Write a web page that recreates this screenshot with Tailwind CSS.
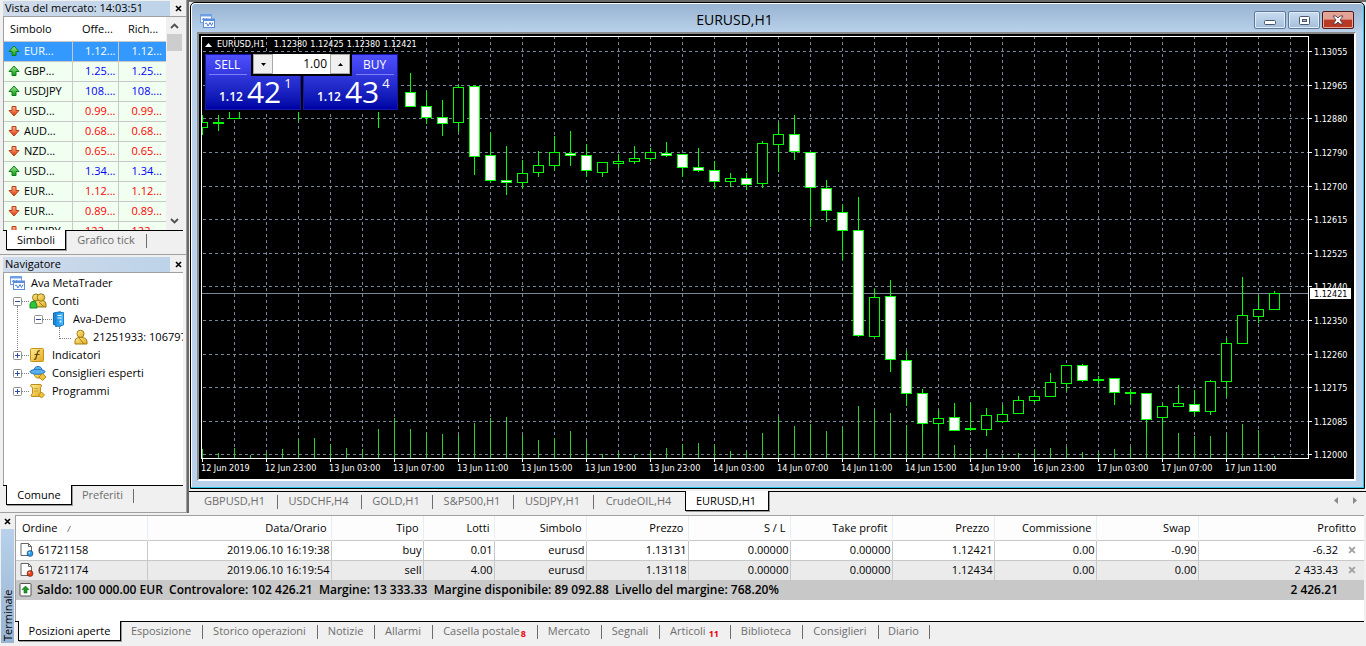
<!DOCTYPE html>
<html lang="it">
<head>
<meta charset="utf-8">
<title>Ava MetaTrader - EURUSD,H1</title>
<script src="https://cdn.jsdelivr.net/npm/@tailwindcss/browser@4"></script>
</head>
<body class="flex h-screen min-h-[560px] flex-col overflow-hidden bg-[#f0f0f0] font-['Open_Sans','Noto_Sans',sans-serif] text-[11px] leading-4 text-black">

<svg class="absolute size-0" aria-hidden="true">
  <defs>
    <linearGradient id="gUp" x1="0" y1="0" x2="0" y2="1"><stop offset="0" stop-color="#9bea8a"/><stop offset="1" stop-color="#129a1c"/></linearGradient>
    <linearGradient id="gDown" x1="0" y1="0" x2="0" y2="1"><stop offset="0" stop-color="#ffb08a"/><stop offset="1" stop-color="#dc3a0a"/></linearGradient>
    <linearGradient id="gGold" x1="0" y1="0" x2="1" y2="1"><stop offset="0" stop-color="#ffec94"/><stop offset="1" stop-color="#e0aa20"/></linearGradient>
    <linearGradient id="gBlue" x1="0" y1="0" x2="1" y2="0"><stop offset="0" stop-color="#1a8be0"/><stop offset="1" stop-color="#52c0fa"/></linearGradient>
  </defs>
  <symbol id="up" viewBox="0 0 12 12"><path d="M6 1 11 6.500H8V10.500H4V6.500H1Z" fill="url(#gUp)" stroke="#0a7d18" stroke-linejoin="round"/></symbol>
  <symbol id="down" viewBox="0 0 12 12"><path d="M6 11 1 5.500H4V1.500H8V5.500H11Z" fill="url(#gDown)" stroke="#b8401a" stroke-linejoin="round"/></symbol>
  <symbol id="charts" viewBox="0 0 16 16">
    <rect x="1.500" y="1.500" width="11" height="8" fill="#fff" stroke="#6d9fe6"/><path d="M1 2.500H13" stroke="#6d9fe6" stroke-width="2"/><path d="M3 7 4.500 5 6 8 8 5" fill="none" stroke="#5b93e0"/>
    <rect x="4.500" y="6" width="11" height="8.500" fill="#fff" stroke="#5b8ddc"/><path d="M4 7H16" stroke="#5b8ddc" stroke-width="2"/><path d="M6 10.500 7.500 10 9 13 11 9.500 12.500 12.500 14 9.500" fill="none" stroke="#4a80d8"/>
  </symbol>
  <symbol id="person" viewBox="0 0 14 16"><path d="M1 15V12Q1 9 4.500 8.500H8Q13 9 13 12.500V15Z" fill="url(#gGold)" stroke="#a87c10"/><circle cx="6.500" cy="4.800" r="3.600" fill="url(#gGold)" stroke="#a87c10"/><path d="M5 9 10 15" stroke="#a87c10"/></symbol>
  <symbol id="people" viewBox="0 0 18 16"><path d="M6 14V10Q6 7 9 7H13Q17 8 17 11V14Z" fill="url(#gGold)" stroke="#8d7a10"/><circle cx="7" cy="4.500" r="3.500" fill="url(#gGold)" stroke="#8d7a10"/><circle cx="12" cy="4.500" r="3.700" fill="url(#gGold)" stroke="#8d7a10"/><path d="M1 15V11Q2 8 5 8Q8 9 8 15Z" fill="#2fc43c" stroke="#128a20"/><path d="M10 9 15 14" stroke="#a87c10"/></symbol>
  <symbol id="server" viewBox="0 0 12 16"><path d="M1 2 8 .7V15.300L1 13.500Z" fill="#1f8de4" stroke="#0c67b4"/><path d="M3 1.500H11V14L5 15.500H3Z" fill="url(#gBlue)" stroke="#1c80cc"/><path d="M5 4.500H9M5 7H9" stroke="#e6f8ff"/><circle cx="8" cy="10.500" r="1" fill="#e6f8ff"/></symbol>
  <symbol id="func" viewBox="0 0 16 16"><rect x="1.500" y="1.500" width="13" height="13" rx="1" fill="url(#gGold)" stroke="#c69318"/><path d="M11 4Q9 3 8.300 6L7 11Q6.500 13 5 12M5.500 7.500H10.500" fill="none" stroke="#5e430a" stroke-width="1.200"/></symbol>
  <symbol id="expert" viewBox="0 0 18 16"><path d="M5 8Q9 10 13 8V11Q11 14 8 13Q5 12 5 8Z" fill="url(#gGold)" stroke="#c08c18"/><path d="M5 6Q5 1.500 9 1.500T13 6" fill="#63b8f4" stroke="#2574b4"/><ellipse cx="8.500" cy="6.800" rx="7.500" ry="2.500" fill="#58aeef" stroke="#2574b4"/><path d="M13.500 8.500 17 12 13.500 15.500 10 12Z" fill="#f1c33c" stroke="#b98914"/></symbol>
  <symbol id="script" viewBox="0 0 16 16"><path d="M2 1.500H12Q13.500 3 11.500 4.500V11H13V13.500H2.500Q1 12 3.500 10.500V4.500Q.5 3.500 2 1.500Z" fill="url(#gGold)" stroke="#bd8f1a"/><path d="M5.500 5.500H9.500M5.500 8H9.500" stroke="#a37812" stroke-dasharray="1 1"/><path d="M12.500 9 15.500 12 12.500 15 9.500 12Z" fill="#f1c33c" stroke="#b98914"/></symbol>
  <symbol id="plus" viewBox="0 0 9 9"><rect x=".5" y=".5" width="8" height="8" rx="1" fill="#fff" stroke="#8e8e8e"/><path d="M2 4.500H7M4.500 2V7" stroke="#2d4fa8"/></symbol>
  <symbol id="minus" viewBox="0 0 9 9"><rect x=".5" y=".5" width="8" height="8" rx="1" fill="#fff" stroke="#8e8e8e"/><path d="M2 4.500H7" stroke="#2d4fa8"/></symbol>
  <symbol id="x" viewBox="0 0 7 7"><path d="M1 1 6 6M6 1 1 6" stroke="currentColor" stroke-width="1.600"/></symbol>
  <symbol id="doc" viewBox="0 0 14 16"><path d="M1 1.500H8.500L11.500 4.500V13.500H1Z" fill="#fff" stroke="#666"/><path d="M8.500 1.500V4.500H11.500" fill="none" stroke="#666"/><circle cx="10" cy="11.500" r="3" fill="currentColor" stroke="#00000066"/><circle cx="9.300" cy="10.600" r=".9" fill="#ffffffaa"/></symbol>
  <symbol id="sum" viewBox="0 0 14 16"><rect x="1" y="1.500" width="11" height="12.500" rx="1" fill="#fff" stroke="#555"/><path d="M6.500 4 10 7.500H8V11H5V7.500H3Z" fill="#1f9a2a" stroke="#0a6d14" stroke-width=".6"/></symbol>
</svg>

<main class="flex min-h-0 flex-1">
  <!-- Left docked panels -->
  <aside class="flex w-[188px] shrink-0 flex-col border-r border-[#696969]">
    <section class="flex h-[255px] shrink-0 flex-col border-b border-r border-[#a0a0a0] pl-[3px] pt-px">
      <header class="flex h-[15px] shrink-0 items-center">
        <h2 class="h-full w-[167px] bg-gradient-to-r from-[#cfdbea] to-[#bdd3e9] pl-[2px] leading-[14px]">Vista del mercato: 14:03:51</h2>
        <button aria-label="Chiudi vista del mercato" class="ml-1 flex size-[8px] items-center justify-center"><svg class="size-[7px]"><use href="#x"/></svg></button>
      </header>
      <div class="flex min-h-0 flex-1 overflow-hidden border-l border-t border-[#a0a0a0]">
        <div class="min-w-0 flex-1 overflow-hidden">
          <table class="w-full table-fixed border-collapse bg-[#f0fff0]">
            <colgroup><col class="w-[68px]"><col class="w-[46px]"><col></colgroup>
            <thead class="bg-white text-left"><tr class="h-[24px] border-b border-[#c8c8c8]"><th class="pl-[6px] font-normal">Simbolo</th><th class="pl-[10px] font-normal">Offe...</th><th class="pl-[10px] font-normal">Rich...</th></tr></thead>
            <tbody id="quotes"></tbody>
          </table>
        </div>
        <div class="mr-[3px] flex w-[17px] flex-col items-center justify-between py-[6px]">
          <svg class="h-[6px] w-[9px]" viewBox="0 0 9 6"><path d="M1 5 4.500 1.500 8 5" fill="none" stroke="#505050" stroke-width="1.800"/></svg>
          <div class="mb-auto mt-[5px] h-[17px] w-[15px] bg-[#cdcdcd]"></div>
          <svg class="h-[6px] w-[9px]" viewBox="0 0 9 6"><path d="M1 1 4.500 4.500 8 1" fill="none" stroke="#505050" stroke-width="1.800"/></svg>
        </div>
      </div>
      <nav class="mr-[3px] flex h-[24px] shrink-0 items-start border-t border-black pl-[3px]">
        <button class="-mt-px h-[20px] w-[60px] border border-t-0 border-black bg-white shadow-[1px_1px_0_#999]">Simboli</button>
        <button class="h-[18px] w-[80px] text-[#6d6d6d]">Grafico tick</button>
        <span class="mt-[3px] h-[14px] w-px bg-[#6d6d6d]"></span>
      </nav>
    </section>

    <section class="flex min-h-0 flex-1 flex-col border-b border-r border-[#a0a0a0] pl-[3px] pt-[2px]">
      <header class="flex h-[15px] shrink-0 items-center">
        <h2 class="h-full w-[167px] bg-gradient-to-r from-[#cfdbea] to-[#bdd3e9] pl-[2px] leading-[14px]">Navigatore</h2>
        <button aria-label="Chiudi navigatore" class="ml-1 flex size-[8px] items-center justify-center"><svg class="size-[7px]"><use href="#x"/></svg></button>
      </header>
      <div class="mr-[3px] min-h-0 flex-1 overflow-hidden border-l border-t border-[#a0a0a0] bg-white pt-px">
        <ul class="relative whitespace-nowrap leading-[18px]">
          <li class="flex h-[18px] items-center gap-[6px] pl-[5px]"><svg class="size-4"><use href="#charts"/></svg>Ava MetaTrader</li>
          <li class="flex h-[18px] items-center pl-[9px]"><svg class="size-[9px]"><use href="#minus"/></svg><span class="w-[7px] border-t border-dotted border-[#808080]"></span><svg class="mr-[5px] h-4 w-[18px]"><use href="#people"/></svg>Conti</li>
          <li class="flex h-[18px] items-center pl-[30px]"><svg class="size-[9px]"><use href="#minus"/></svg><span class="w-[9px] border-t border-dotted border-[#808080]"></span><svg class="mr-[8px] h-4 w-[13px]"><use href="#server"/></svg>Ava-Demo</li>
          <li class="flex h-[18px] items-center pl-[55px]"><span class="mb-[9px] h-[12px] w-[12px] shrink-0 border-b border-l border-dotted border-[#808080]"></span><svg class="mr-[5px] ml-[3px] h-4 w-[14px] shrink-0"><use href="#person"/></svg>21251933: 106797</li>
          <li class="flex h-[18px] items-center pl-[9px]"><svg class="size-[9px]"><use href="#plus"/></svg><span class="w-[7px] border-t border-dotted border-[#808080]"></span><svg class="mr-[7px] size-4"><use href="#func"/></svg>Indicatori</li>
          <li class="flex h-[18px] items-center pl-[9px]"><svg class="size-[9px]"><use href="#plus"/></svg><span class="w-[7px] border-t border-dotted border-[#808080]"></span><svg class="mr-[5px] h-4 w-[18px]"><use href="#expert"/></svg>Consiglieri esperti</li>
          <li class="flex h-[18px] items-center pl-[9px]"><svg class="size-[9px]"><use href="#plus"/></svg><span class="w-[7px] border-t border-dotted border-[#808080]"></span><svg class="mr-[7px] size-4"><use href="#script"/></svg>Programmi</li>
          <li aria-hidden="true" class="absolute left-[13px] top-[32px] h-[46px] border-l border-dotted border-[#808080]"></li>
        </ul>
      </div>
      <nav class="mr-[3px] flex h-[27px] shrink-0 items-start border-t border-black pl-[3px]">
        <button class="-mt-px h-[20px] w-[66px] border border-t-0 border-black bg-white shadow-[1px_1px_0_#999]">Comune</button>
        <button class="h-[18px] w-[61px] text-[#6d6d6d]">Preferiti</button>
        <span class="mt-[3px] h-[14px] w-px bg-[#6d6d6d]"></span>
      </nav>
    </section>
  </aside>

  <!-- Chart workspace -->
  <section class="flex min-w-0 flex-1 flex-col border-l border-t-2 border-[#696969]">
    <article class="ml-px mr-px flex min-h-0 flex-1 flex-col rounded-t-[5px] border border-black bg-[#b9d1ea] shadow-[inset_-1px_-1px_0_#2cc4e4,inset_1px_1px_0_#fff]">
      <header class="mx-px mt-px flex h-[28px] shrink-0 items-center rounded-t-[4px] bg-gradient-to-b from-[#98b4d2] to-[#b9d1ea] pl-[7px] pr-[7px]">
        <svg class="mt-[5px] size-4"><use href="#charts"/></svg>
        <h1 class="flex-1 pt-[3px] text-center text-[14px]">EURUSD,H1</h1>
        <div class="mt-[4px] flex gap-[2px] pr-[2px]">
          <button aria-label="Riduci" class="flex h-[18px] w-8 items-center justify-center rounded-[2px] border border-[#5e7896] bg-gradient-to-b from-[#c9dcf0] to-[#a3bfdc] pt-[4px] shadow-[inset_0_0_0_1px_#e0ecf8]"><svg class="h-[5px] w-[12px]"><rect x=".5" y=".5" width="11" height="4" rx="1" fill="#fff" stroke="#4b5668"/></svg></button>
          <button aria-label="Ingrandisci" class="flex h-[18px] w-8 items-center justify-center rounded-[2px] border border-[#5e7896] bg-gradient-to-b from-[#c9dcf0] to-[#a3bfdc] shadow-[inset_0_0_0_1px_#e0ecf8]"><svg class="h-[9px] w-[11px]"><rect x=".5" y=".5" width="10" height="8" rx="1" fill="#fff" stroke="#4b5668"/><rect x="3.500" y="3.500" width="4" height="2" fill="#9db8d4" stroke="#4b5668"/></svg></button>
          <button aria-label="Chiudi" class="flex h-[18px] w-8 items-center justify-center rounded-[2px] border border-[#4e1a1a] bg-gradient-to-b from-[#e3a296] from-45% to-[#b83a24] to-50% shadow-[inset_0_0_0_1px_#e8a89a]"><svg class="h-[10px] w-[12px]" viewBox="0 0 12 10"><path d="M1 1H4L6 3 8 1H11L8 5 11 9H8L6 7 4 9H1L4 5Z" fill="#fff" stroke="#4b3c48" stroke-width=".9"/></svg></button>
        </div>
      </header>
      <div class="mb-[7px] ml-[6px] mr-[8px] grid min-h-0 flex-1 grid-cols-[minmax(0,1fr)_45px] grid-rows-[minmax(0,1fr)_20px] border-2 border-b-white border-l-[#8a8a8a] border-r-white border-t-[#8a8a8a] bg-black pl-[2px] pt-[2px]">
        <div class="relative min-h-0 overflow-hidden border border-white">
          <svg id="plot" class="block h-full w-full" shape-rendering="crispEdges" role="img" aria-label="Grafico EURUSD H1"></svg>
          <div class="absolute left-[3px] top-[1px] flex items-center gap-[3px] whitespace-pre font-['DejaVu_Sans_Condensed','DejaVu_Sans',sans-serif] text-[9px] leading-[13px] text-white"><svg class="mr-[2px] h-[4px] w-[7px]"><path d="M0 4 3.500 0 7 4Z" fill="#fff"/></svg><span class="pr-[6px]">EURUSD,H1</span><span>1.12380</span><span>1.12425</span><span>1.12380</span><span>1.12421</span></div>
          <form class="absolute left-[3px] top-[17px] flex gap-[2px] bg-black pb-[2px] pr-px text-white" onsubmit="return false">
            <button class="flex h-[56px] w-[96px] flex-col border border-[#1616a8] bg-gradient-to-b from-[#4f4fff] to-[#0000a4]">
              <span class="flex h-[21px] w-[43px] items-center justify-center text-[12px]">SELL</span>
              <span class="ml-[3px] h-px w-[38px] bg-[#8080ff]"></span>
              <span class="flex flex-1 self-stretch pl-[13px]"><b class="mt-[14px] text-[12px] font-semibold">1.12</b><span class="ml-[4px] text-[30px] leading-[34px]">42</span><span class="ml-[3px] text-[13px]">1</span></span>
            </button>
            <button class="flex h-[56px] w-[95px] flex-col border border-[#1616a8] bg-gradient-to-b from-[#4f4fff] to-[#0000a4]">
              <span class="flex h-[21px] w-[45px] items-center justify-center self-end text-[12px]">BUY</span>
              <span class="mr-[3px] h-px w-[38px] self-end bg-[#8080ff]"></span>
              <span class="flex flex-1 self-stretch pl-[13px]"><b class="mt-[14px] text-[12px] font-semibold">1.12</b><span class="ml-[4px] text-[30px] leading-[34px]">43</span><span class="ml-[3px] text-[13px]">4</span></span>
            </button>
            <div class="absolute left-[46px] top-0 flex h-[22px] w-[101px] border-x-2 border-b-2 border-black bg-[#f0f0f0] text-black">
              <button aria-label="Diminuisci lotti" class="flex w-[20px] items-center justify-center border border-[#a8a8a8]"><svg class="h-[3px] w-[5px]"><path d="M0 0H5L2.500 3Z"/></svg></button>
              <input aria-label="Lotti" value="1.00" class="min-w-0 flex-1 bg-white pr-[3px] text-right text-[12px] outline-none">
              <button aria-label="Aumenta lotti" class="flex w-[20px] items-center justify-center border border-[#a8a8a8]"><svg class="h-[3px] w-[5px]"><path d="M0 3H5L2.500 0Z"/></svg></button>
            </div>
          </form>
        </div>
        <svg id="prices" class="block h-full w-full overflow-visible font-['DejaVu_Sans_Condensed','DejaVu_Sans',sans-serif] text-[9px]" fill="#fff"></svg>
        <svg id="times" class="block h-full w-full font-['DejaVu_Sans_Condensed','DejaVu_Sans',sans-serif] text-[9px]" fill="#fff"></svg>
      </div>
    </article>
    <nav class="mt-[2px] flex h-[22px] shrink-0 items-start border-t border-black text-[#6d6d6d]">
      <div class="flex flex-1 items-start">
        <button class="h-[17px] w-[88px] pl-[3px]">GBPUSD,H1</button><span class="mt-[3px] h-[14px] w-px bg-[#6d6d6d]"></span>
        <button class="h-[17px] w-[83px] pr-[2px]">USDCHF,H4</button><span class="mt-[3px] h-[14px] w-px bg-[#6d6d6d]"></span>
        <button class="h-[17px] w-[70px] pr-[2px]">GOLD,H1</button><span class="mt-[3px] h-[14px] w-px bg-[#6d6d6d]"></span>
        <button class="h-[17px] w-[80px] pr-[2px]">S&amp;P500,H1</button><span class="mt-[3px] h-[14px] w-px bg-[#6d6d6d]"></span>
        <button class="h-[17px] w-[79px] pr-[2px]">USDJPY,H1</button><span class="mt-[3px] h-[14px] w-px bg-[#6d6d6d]"></span>
        <button class="h-[17px] w-[91px] pr-[2px]">CrudeOIL,H4</button>
        <button class="-mt-px h-[20px] w-[84px] border border-t-0 border-black bg-white pr-[2px] text-black shadow-[1px_1px_0_#999]">EURUSD,H1</button>
      </div>
      <div class="flex gap-[14px] pr-[8px] pt-[5px]">
        <button aria-label="Scorri a sinistra" class="flex"><svg class="h-[7px] w-[5px]"><path d="M4 0V7L0 3.500Z" fill="#8a8a8a"/></svg></button>
        <button aria-label="Scorri a destra" class="flex"><svg class="h-[7px] w-[5px]"><path d="M0 0V7L4 3.500Z" fill="#8a8a8a"/></svg></button>
      </div>
    </nav>
  </section>
</main>

<!-- Terminal -->
<footer class="flex h-[133px] shrink-0 pt-[2px]">
  <div class="flex w-[15px] shrink-0 flex-col items-center">
    <button aria-label="Chiudi terminale" class="mt-[2px] flex size-[8px] items-center justify-center"><svg class="size-[7px]"><use href="#x"/></svg></button>
    <h2 class="mb-[3px] mt-[4px] w-[13px] flex-1 rotate-180 bg-gradient-to-t from-[#b9d1ea] to-[#98b4d2] pt-[2px] text-[11px] leading-[13px] [writing-mode:vertical-rl]">Terminale</h2>
  </div>
  <div class="mr-[2px] flex min-w-0 flex-1 flex-col">
    <div class="flex-1 overflow-hidden border-l border-t border-[#a0a0a0] bg-white">
      <table class="w-full table-fixed border-collapse text-right">
        <colgroup><col class="w-[131px]"><col class="w-[184px]"><col class="w-[92px]"><col class="w-[71px]"><col class="w-[92px]"><col class="w-[102px]"><col class="w-[102px]"><col class="w-[102px]"><col class="w-[102px]"><col class="w-[102px]"><col class="w-[102px]"><col></colgroup>
        <thead><tr class="h-[24px] border-b border-[#c8c8c8] bg-[#fdfdfd]">
          <th class="border-r border-[#e6eef6] pl-[6px] text-left font-normal">Ordine <svg class="ml-[7px] inline h-[6px] w-[4px]"><path d="M.5 6 3.500 0" stroke="#777"/></svg></th>
          <th class="border-r border-[#e6eef6] pr-[4px] font-normal">Data/Orario</th><th class="border-r border-[#e6eef6] pr-[4px] font-normal">Tipo</th><th class="border-r border-[#e6eef6] pr-[4px] font-normal">Lotti</th><th class="border-r border-[#e6eef6] pr-[4px] font-normal">Simbolo</th><th class="border-r border-[#e6eef6] pr-[4px] font-normal">Prezzo</th><th class="border-r border-[#e6eef6] pr-[4px] font-normal">S / L</th><th class="border-r border-[#e6eef6] pr-[4px] font-normal">Take profit</th><th class="border-r border-[#e6eef6] pr-[4px] font-normal">Prezzo</th><th class="border-r border-[#e6eef6] pr-[4px] font-normal">Commissione</th><th class="border-r border-[#e6eef6] pr-[7px] font-normal">Swap</th><th class="pr-[8px] font-normal">Profitto</th>
        </tr></thead>
        <tbody id="orders"></tbody>
        <tfoot><tr class="h-[20px] bg-[#c8c8c8] text-[12px] font-semibold"><td colspan="11" class="whitespace-pre text-left"><span class="flex items-center"><svg class="ml-[3px] mr-[4px] h-4 w-[14px]"><use href="#sum"/></svg>Saldo: 100 000.00 EUR  Controvalore: 102 426.21  Margine: 13 333.33  Margine disponibile: 89 092.88  Livello del margine: 768.20%</span></td><td class="pr-[26px]">2 426.21</td></tr></tfoot>
      </table>
    </div>
    <nav class="flex h-[25px] shrink-0 items-start border-t border-black pl-[3px] text-[#6d6d6d]">
      <button class="-mt-px h-[20px] w-[103px] border border-t-0 border-black bg-white text-black shadow-[1px_1px_0_#999]">Posizioni aperte</button>
      <button class="h-[17px] w-[81px] pr-px">Esposizione</button><span class="mt-[3px] h-[14px] w-px bg-[#6d6d6d]"></span>
      <button class="h-[17px] w-[114px] pr-px">Storico operazioni</button><span class="mt-[3px] h-[14px] w-px bg-[#6d6d6d]"></span>
      <button class="h-[17px] w-[56px] pr-px">Notizie</button><span class="mt-[3px] h-[14px] w-px bg-[#6d6d6d]"></span>
      <button class="h-[17px] w-[57px] pr-px">Allarmi</button><span class="mt-[3px] h-[14px] w-px bg-[#6d6d6d]"></span>
      <button class="h-[17px] w-[104px] whitespace-nowrap pr-px">Casella postale<sub class="ml-px text-[9px] font-bold text-red-600">8</sub></button><span class="mt-[3px] h-[14px] w-px bg-[#6d6d6d]"></span>
      <button class="h-[17px] w-[63px] pr-px">Mercato</button><span class="mt-[3px] h-[14px] w-px bg-[#6d6d6d]"></span>
      <button class="h-[17px] w-[57px] pr-px">Segnali</button><span class="mt-[3px] h-[14px] w-px bg-[#6d6d6d]"></span>
      <button class="h-[17px] w-[70px] whitespace-nowrap pr-px">Articoli<sub class="ml-[3px] text-[9px] font-bold text-red-600">11</sub></button><span class="mt-[3px] h-[14px] w-px bg-[#6d6d6d]"></span>
      <button class="h-[17px] w-[71px] pr-px">Biblioteca</button><span class="mt-[3px] h-[14px] w-px bg-[#6d6d6d]"></span>
      <button class="h-[17px] w-[75px] pr-px">Consiglieri</button><span class="mt-[3px] h-[14px] w-px bg-[#6d6d6d]"></span>
      <button class="h-[17px] w-[50px] pr-px">Diario</button><span class="mt-[3px] h-[14px] w-px bg-[#6d6d6d]"></span>
    </nav>
  </div>
</footer>

<script>
  // Market watch rows: symbol, price, direction, selected
  const quotes = [
    ['EUR...', '1.12...', 'up', true], ['GBP...', '1.25...', 'up'], ['USDJPY', '108....', 'up'],
    ['USD...', '0.99...', 'down'], ['AUD...', '0.68...', 'down'], ['NZD...', '0.65...', 'down'],
    ['USD...', '1.34...', 'up'], ['EUR...', '1.12...', 'down'], ['EUR...', '0.89...', 'down'], ['EURJPY', '122....', 'down']
  ];
  document.getElementById('quotes').innerHTML = quotes.map(([s, p, dir, sel]) => {
    const tone = sel ? 'text-white' : dir === 'up' ? 'text-[#0000ff]' : 'text-[#ff0000]';
    return `<tr class="h-[20px] border-b border-[#c8c8c8] ${sel ? 'bg-[#3399ff] text-white' : ''}">
      <td class="border-r border-[#c8c8c8]"><span class="flex items-center"><svg class="ml-[4px] mr-[4px] size-[12px] shrink-0"><use href="#${dir}"/></svg>${s}</span></td>
      <td class="border-r border-[#c8c8c8] pr-[2px] text-right ${tone}">${p}</td>
      <td class="pr-[4px] text-right ${tone}">${p}</td></tr>`;
  }).join('');

  const orders = [
    ['61721158', '2019.06.10 16:19:38', 'buy', '0.01', 'eurusd', '1.13131', '0.00000', '0.00000', '1.12421', '0.00', '-0.90', '-6.32'],
    ['61721174', '2019.06.10 16:19:54', 'sell', '4.00', 'eurusd', '1.13118', '0.00000', '0.00000', '1.12434', '0.00', '0.00', '2 433.43']
  ];
  document.getElementById('orders').innerHTML = orders.map((o, i) =>
    `<tr class="h-[20px] ${i ? 'bg-[#ebebeb]' : 'border-b border-[#c8c8c8] bg-white'}">` + o.map((v, c) => {
      if (c === 0) return `<td class="border-r border-[#c8c8c8] text-left"><span class="flex items-center"><svg class="ml-[4px] mr-[4px] h-4 w-[14px] ${i ? 'text-[#e8401a]' : 'text-[#2a9df0]'}"><use href="#doc"/></svg>${v}</span></td>`;
      if (c === 11) return `<td><span class="flex items-center justify-end gap-[10px] pr-[8px]">${v}<button aria-label="Chiudi ordine ${o[0]}" class="text-[#a0a0a0]"><svg class="size-[8px]" viewBox="0 0 7 7"><use href="#x"/></svg></button></span></td>`;
      return `<td class="border-r border-[#c8c8c8] pr-px">${v}</td>`;
    }).join('') + '</tr>').join('');

  // Candles: x, high, low, body top, body bottom, kind (F filled, H hollow, D doji)
  const candles = [
    [202,115,135,122,128,'H'],[218,115,131,122,124,'D'],[234,100,119,100,119,'H'],[298,100,121,0,0,''],[378,100,128,0,0,''],
    [410,73,107,92,107,'F'],[426,91,124,106,118,'F'],[442,100,136,117,124,'F'],[458,85,132,87,123,'H'],[474,85,175,86,157,'F'],
    [490,133,183,155,181,'F'],[506,146,195,180,183,'F'],[522,160,188,173,183,'H'],[538,151,177,165,173,'H'],[554,136,170,152,166,'H'],
    [570,131,166,153,156,'F'],[586,144,177,155,171,'F'],[602,162,177,162,173,'H'],[618,154,168,161,164,'H'],[634,146,164,158,162,'H'],
    [650,148,161,152,159,'H'],[666,142,157,153,156,'F'],[682,154,177,154,168,'F'],[698,148,172,167,171,'F'],[714,161,189,170,182,'F'],
    [730,173,187,178,182,'H'],[746,173,190,178,185,'F'],[762,141,188,143,184,'H'],[778,122,172,134,145,'H'],[794,115,160,134,152,'F'],
    [810,152,227,152,188,'F'],[826,180,222,188,211,'F'],[842,205,260,212,231,'F'],[858,197,337,230,336,'F'],[874,289,337,297,337,'H'],
    [890,280,372,296,360,'F'],[906,351,406,360,394,'F'],[922,389,433,393,424,'F'],[938,410,435,418,424,'H'],[954,403,431,417,431,'F'],
    [970,403,431,428,430,'D'],[986,408,436,415,430,'H'],[1002,405,423,414,422,'H'],[1018,396,414,400,414,'H'],[1034,390,403,396,401,'H'],
    [1050,373,397,382,397,'H'],[1066,365,391,365,384,'H'],[1082,364,382,365,381,'F'],[1098,376,384,379,381,'D'],[1114,378,405,378,393,'F'],
    [1130,389,404,392,394,'D'],[1146,393,435,393,420,'F'],[1162,403,427,406,418,'H'],[1178,385,407,403,407,'H'],[1194,390,416,404,412,'F'],
    [1210,380,415,381,412,'H'],[1226,338,397,343,382,'H'],[1242,277,344,315,344,'H'],[1258,295,323,309,317,'H'],[1274,291,310,293,310,'H']
  ];
  // Top of each volume bar, one per 16px step
  const volumes = [449,453,448,455,453,449,439,438,444,448,449,429,418,429,433,434,435,423,418,417,435,440,438,431,441,454,453,455,452,448,444,443,445,451,451,433,417,426,424,431,427,406,410,413,425,433,435,445,448,449,455,453,449,448,447,452,453,449,447,435,427,433,436,436,434,424,430,456];
  const levels = [[51,'1.13055'],[85,'1.12965'],[118,'1.12880'],[152,'1.12790'],[186,'1.12700'],[219,'1.12615'],[253,'1.12525'],[286,'1.12440'],[320,'1.12350'],[354,'1.12260'],[387,'1.12175'],[421,'1.12085'],[454,'1.12000']];
  const times = ['12 Jun 2019','12 Jun 23:00','13 Jun 03:00','13 Jun 07:00','13 Jun 11:00','13 Jun 15:00','13 Jun 19:00','13 Jun 23:00','14 Jun 03:00','14 Jun 07:00','14 Jun 11:00','14 Jun 15:00','14 Jun 19:00','16 Jun 23:00','17 Jun 03:00','17 Jun 07:00','17 Jun 11:00'];

  let g = '<g transform="translate(-202 -37)">';
  for (let x = 234; x <= 1290; x += 32) g += `<path d="M${x + .5} 36V458" stroke="#778899" stroke-dasharray="3 3"/>`;
  levels.forEach(([y]) => g += `<path d="M203 ${y + .5}H1308" stroke="#778899" stroke-dasharray="3 3"/>`);
  g += '<path d="M202 293.5H1308" stroke="#778899"/>';
  volumes.forEach((y, i) => g += `<rect x="${202 + i * 16}" y="${y}" width="1" height="${458 - y}" fill="#32cd32"/>`);
  candles.forEach(([x, hi, lo, t, b, k]) => {
    g += `<rect x="${x}" y="${hi}" width="1" height="${lo - hi}" fill="#00ff00"/>`;
    if (k === 'D') g += `<rect x="${x - 5}" y="${t}" width="11" height="2" fill="#00ff00"/>`;
    else if (k) g += `<rect x="${x - 4.5}" y="${t + .5}" width="10" height="${b - t - 1}" fill="${k === 'F' ? '#fff' : '#000'}" stroke="#00ff00"/>`;
  });
  document.getElementById('plot').innerHTML = g + '</g>';

  document.getElementById('prices').innerHTML = levels.map(([y, t]) =>
    `<rect y="${y - 36}" width="3" height="1"/><text x="5" y="${y - 32}">${t}</text>`).join('') +
    '<rect x="1" y="252" width="41" height="11"/><text x="5" y="261" fill="#000">1.12421</text>';
  document.getElementById('times').innerHTML = times.map((t, i) =>
    `<rect x="${1 + i * 64}" width="1" height="3"/><text x="${i * 64}" y="12">${t}</text>`).join('');
</script>
</body>
</html>
